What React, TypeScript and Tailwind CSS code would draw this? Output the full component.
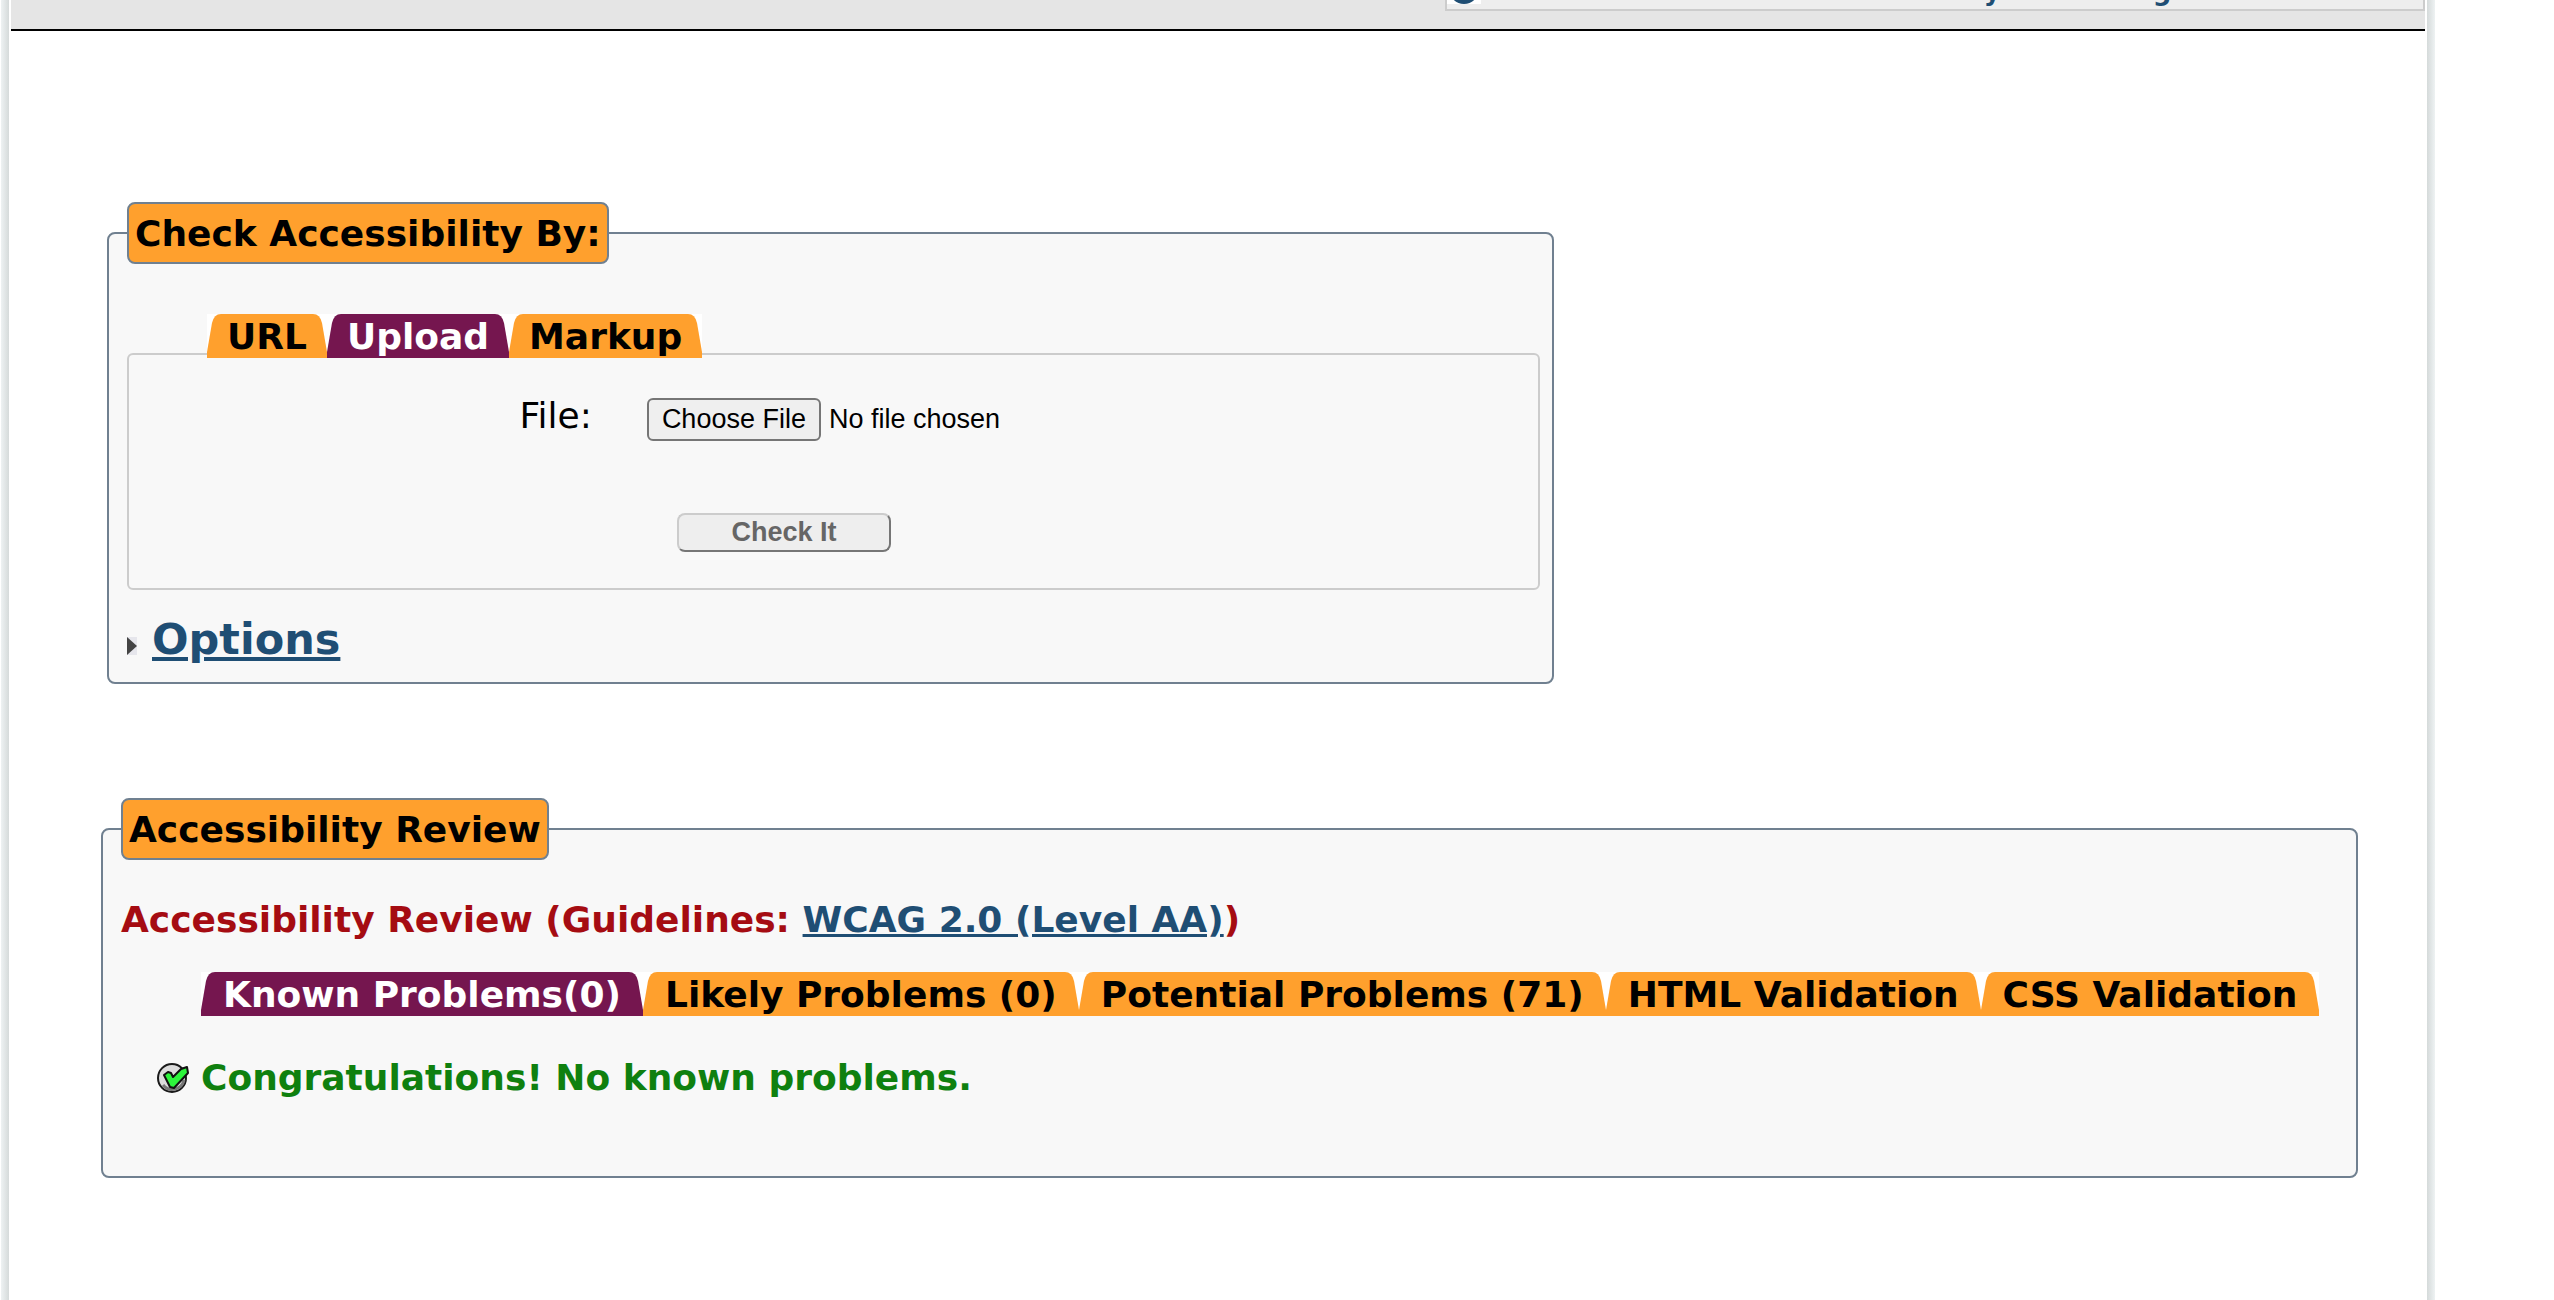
import type { ReactNode } from "react";

function TabEdge({ flip = false }: { flip?: boolean }) {
  return (
    <svg
      aria-hidden="true"
      width="14"
      height="44"
      viewBox="0 0 14 44"
      className={flip ? "-scale-x-100 fill-current" : "fill-current"}
    >
      <path d="M0 44V38L5 9Q7 0 14 0V44Z" />
    </svg>
  );
}

type TabsProps = { items: string[]; active: string; label: string; wide?: boolean };

function Tabs({ items, active, label, wide = false }: TabsProps) {
  return (
    <div role="tablist" aria-label={label} className="relative flex">
      {items.map((item) => {
        const on = item === active;
        const pad = wide ? "px-2" : "px-1.5";
        return (
          <button
            key={item}
            type="button"
            role="tab"
            aria-selected={on}
            className={
              on
                ? "flex h-11 bg-white font-bold text-[#75164f]"
                : "flex h-11 bg-white font-bold text-[#ffa02d]"
            }
          >
            <TabEdge />
            <span
              className={
                (on
                  ? "h-11 bg-[#75164f] leading-[46px] whitespace-nowrap text-white "
                  : "h-11 bg-[#ffa02d] leading-[46px] whitespace-nowrap text-black ") + pad
              }
            >
              {item}
            </span>
            <TabEdge flip />
          </button>
        );
      })}
    </div>
  );
}

function Legend({ children }: { children: ReactNode }) {
  return (
    <legend className="rounded-lg border-2 border-[#708090] bg-[#ffa02d] px-1.5 pt-[9px] pb-[7px] leading-[42px] font-bold text-black">
      {children}
    </legend>
  );
}

function CheckIcon() {
  return (
    <svg aria-hidden="true" width="32" height="32" viewBox="0 0 32 32" className="shrink-0">
      <circle cx="15" cy="16" r="14" fill="#dcdcdc" stroke="#1a1a1a" strokeWidth="2" />
      <path d="M6 23a12 12 0 0 0 21-5" fill="none" stroke="#777" strokeWidth="3" />
      <path
        d="M7 13L11 10L14 11L16 15L24 7L30 5L31 11L17 26L13 25Z"
        fill="#2df53c"
        stroke="#111"
        strokeWidth="2"
        strokeLinejoin="round"
      />
    </svg>
  );
}

export default function App() {
  return (
    <div className="flex min-h-screen bg-white pr-[119px] pl-px font-[Verdana,'DejaVu_Sans',sans-serif] text-[36px] leading-[42px] text-black">
      <div className="mr-0.5 w-2 bg-linear-to-r from-[#eef2f3] to-[#d5dada]" />
      <div className="min-w-0 flex-1">
        <header className="flex h-[31px] items-start justify-end overflow-hidden border-b-2 border-black bg-[#e5e5e5]">
          <div className="-mt-[29px] flex h-10 w-[980px] items-start border-2 border-[#ccc] bg-[#eee]">
            <span className="flex h-[31px] w-[34px] items-end justify-center bg-white">
              <svg aria-hidden="true" width="30" height="30" viewBox="0 0 30 30">
                <circle cx="15" cy="15" r="15" fill="#1f4e74" />
              </svg>
            </span>
            <a
              href="#subscribe"
              className="ml-4 pt-[3px] text-[26px] leading-[30px] font-bold whitespace-nowrap text-[#1f4e74]"
            >
              Subscribe for sites to accessibility monitoring environment
            </a>
          </div>
        </header>

        <main className="pt-[171px] pr-[67px] pl-[90px]">
          <fieldset className="ml-1.5 w-[64.1%] rounded-lg border-2 border-[#708090] bg-[#f8f8f8] pr-3 pb-[18px] pl-[18px]">
            <Legend>Check Accessibility By:</Legend>
            <div className="-mb-[5px] pt-[50px] pl-20">
              <Tabs items={["URL", "Upload", "Markup"]} active="Upload" label="Input method" />
            </div>
            <form
              className="rounded-md border-2 border-[#ccc] pt-10 pb-9"
              onSubmit={(e) => e.preventDefault()}
            >
              <div className="grid grid-cols-[33%_1fr] items-baseline gap-x-[53px]">
                <label htmlFor="upload" className="pr-0.5 text-right">
                  File:
                </label>
                <input
                  id="upload"
                  type="file"
                  className="h-[43px] font-['Liberation_Sans',Arial,sans-serif] text-[27px] leading-[31px] file:mr-2 file:h-[43px] file:rounded-md file:border-2 file:border-solid file:border-[#767676] file:bg-[#efefef] file:px-[13px]"
                />
              </div>
              <button
                type="submit"
                className="mt-[72px] ml-[38.9%] block h-[39px] w-[214px] rounded-lg border-2 border-t-[#ccc] border-r-[#767676] border-b-[#767676] border-l-[#ccc] bg-[#eee] font-['Liberation_Sans',Arial,sans-serif] text-[27px] leading-[31px] font-bold text-[#666]"
              >
                Check It
              </button>
            </form>
            <h2 className="mt-6 flex items-center text-[43px] leading-[50px] font-bold">
              <svg aria-hidden="true" width="10" height="18" viewBox="0 0 10 18" className="mt-3.5">
                <path d="M0 0H10V18H0Z" fill="#e6e6ec" />
                <path d="M0 0L10 9L0 18Z" fill="#444" />
              </svg>
              <a href="#options" className="ml-[15px] text-[#1f4e74] underline">
                Options
              </a>
            </h2>
          </fieldset>

          <fieldset className="mt-[114px] rounded-lg border-2 border-[#708090] bg-[#f8f8f8] px-[18px] pb-[77px]">
            <Legend>Accessibility Review</Legend>
            <h3 className="mt-[39px] font-bold text-[#a50c12]">
              Accessibility Review (Guidelines:{" "}
              <a href="#wcag" className="text-[#1f4e74] underline">
                WCAG 2.0 (Level AA)
              </a>
              )
            </h3>
            <div className="pt-[31px] pl-20">
              <Tabs
                wide
                items={[
                  "Known Problems(0)",
                  "Likely Problems (0)",
                  "Potential Problems (71)",
                  "HTML Validation",
                  "CSS Validation",
                ]}
                active="Known Problems(0)"
                label="Review results"
              />
            </div>
            <p className="mt-[41px] ml-9 flex items-center font-bold text-[#0f800f]">
              <CheckIcon />
              <span className="ml-3">Congratulations! No known problems.</span>
            </p>
          </fieldset>
        </main>
      </div>
      <div className="ml-0.5 w-2 bg-linear-to-r from-[#d5dada] to-[#eef2f3]" />
    </div>
  );
}
